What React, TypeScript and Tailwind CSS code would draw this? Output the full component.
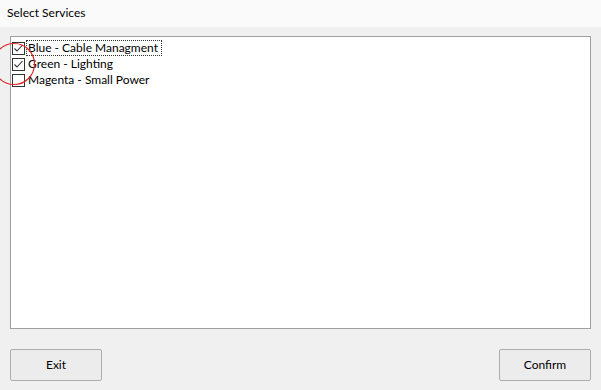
import React from "react";

const items = [
  { label: "Blue - Cable Managment", checked: true, focus: true },
  { label: "Green - Lighting", checked: true, focus: false },
  { label: "Magenta - Small Power", checked: false, focus: false },
];

function Box({ checked }: { checked: boolean }) {
  return (
    <span className="w-[13px] h-[13px] border border-[#333] bg-white flex items-center justify-center shrink-0">
      {checked && (
        <svg width="11" height="11" viewBox="0 0 11 11">
          <path d="M1.5 5.5 L4 8 L9.5 2" fill="none" stroke="#333" strokeWidth="1.1" />
        </svg>
      )}
    </span>
  );
}

export default function App() {
  return (
    <div
      className="w-[601px] h-[390px] bg-[#f0f0f0] flex flex-col relative overflow-hidden text-[12px] text-[#000]"
      style={{ fontFamily: '"Segoe UI", Lato, "Open Sans", sans-serif' }}
    >
      <div className="h-[27px] bg-[#fafafa] px-[7px] pt-[5px] leading-[16px]">Select Services</div>
      <div className="mx-[10px] mt-[9px] h-[293px] border border-[#a0a0a0] bg-white pt-[3px]">
        {items.map((it) => (
          <div key={it.label} className="flex items-center h-[16px] pl-[1px]">
            <Box checked={it.checked} />
            <span
              className={
                "ml-[1px] pl-[1px] pr-[3px] leading-[14px] border border-dotted " +
                (it.focus ? "border-[#333]" : "border-transparent")
              }
            >
              {it.label}
            </span>
          </div>
        ))}
      </div>
      <div className="flex justify-between px-[10px] mt-[20px]">
        <button className="w-[92px] h-[32px] border border-[#adadad] rounded-[2px] bg-[#ececec]">Exit</button>
        <button className="w-[92px] h-[32px] border border-[#adadad] rounded-[2px] bg-[#ececec]">Confirm</button>
      </div>
      <svg className="absolute left-[-8px] top-[42px] pointer-events-none" width="44" height="44" viewBox="0 0 44 44">
        <circle cx="22" cy="22" r="20.5" fill="none" stroke="#e02828" strokeWidth="1.2" />
      </svg>
    </div>
  );
}
